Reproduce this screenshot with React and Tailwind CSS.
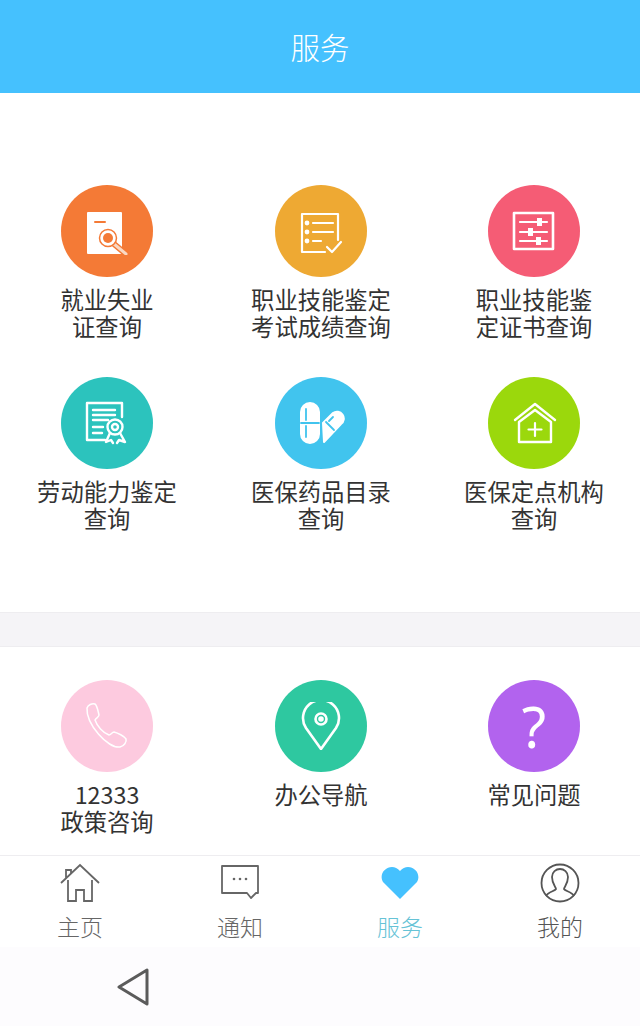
import React from 'react';

const Ico = ({ children, className = 'w-[48px] h-[48px]', sw = 2 }) => (
    <svg viewBox="0 0 48 48" className={className} fill="none" stroke="currentColor" strokeWidth={sw} strokeLinecap="round" strokeLinejoin="round">
        {children}
    </svg>
);

// 48x48 box is centred on the 92px circle
const IconSearchDoc = () => (
    <Ico>
        <path d="M5 6H38V46H5Z" fill="#fff" stroke="#fff" />
        <path d="M12 15H22" stroke="#f47a36" />
        <path d="M31 37L43 47" stroke="#f47a36" strokeWidth="6" />
        <path d="M31 37L43 47" stroke="#f9d9c4" strokeWidth="3" />
        <circle cx="25" cy="31" r="8.500" fill="#fff" stroke="#f47a36" strokeWidth="1.500" />
        <circle cx="25" cy="31" r="5" fill="#f47a36" stroke="none" />
    </Ico>
);

const IconChecklist = () => (
    <Ico sw={2.200}>
        <path d="M28 45H5V7H41V33" />
        <path d="M16 16H36M16 25H36M16 34H24" />
        <circle cx="10" cy="16" r="1.300" fill="currentColor" />
        <circle cx="10" cy="25" r="1.300" fill="currentColor" />
        <circle cx="10" cy="34" r="1.300" fill="currentColor" />
        <path d="M30 40L35 45L44 35" />
    </Ico>
);

const IconSliders = () => (
    <Ico sw={2.200}>
        <rect x="4" y="6" width="39" height="36" strokeWidth="2.600" />
        <path d="M10 15H37M10 25H37M10 34H37" />
        <rect x="27" y="11" width="5" height="8" fill="currentColor" stroke="none" />
        <rect x="18" y="21" width="5" height="8" fill="currentColor" stroke="none" />
        <rect x="26" y="30" width="5" height="8" fill="currentColor" stroke="none" />
    </Ico>
);

const IconCert = () => (
    <Ico sw={2.400}>
        <path d="M22 41H4V4H39V18" />
        <path d="M10 11H32M10 16H32M10 21H25M10 28H20M10 34H19" />
        <circle cx="32" cy="28" r="7.500" />
        <circle cx="32" cy="28" r="3" />
        <path d="M27 34L23 43L28 41L30 44M37 34L42 43L36 41L34 44" />
    </Ico>
);

const IconPills = () => (
    <Ico>
        <path d="M4 13A9 9 0 0 1 22 13V35A9 9 0 0 1 4 35Z" fill="#fff" stroke="#fff" />
        <path d="M9 10V21M4 24H22M9 27V38" stroke="#41c4ee" strokeWidth="1.800" />
        <path d="M27 43L44 25A6 6 0 0 0 36 14L26 24Z" fill="#fff" stroke="#fff" />
        <path d="M29 23L37 31M36 18L32 22" stroke="#41c4ee" strokeWidth="1.800" />
    </Ico>
);

const IconClinic = () => (
    <Ico>
        <path d="M5 21L25 5L45 21" strokeWidth="2.400" />
        <path d="M9 23V43H41V23L25 11Z" strokeWidth="2.400" />
        <path d="M25 24V37M18.500 30.500H31.500" strokeWidth="2.200" />
    </Ico>
);

const IconPhone = () => (
    <Ico sw={1.500}>
        <path d="M4 6C5 3 9 1 12 2C14 3 15 9 16 13C16 15 13 16 12 18C14 24 20 31 26 33C28 33 29 30 31 30C35 31 41 34 43 37C44 40 41 44 37 45C25 47 3 22 4 6Z" />
    </Ico>
);

const IconPin = () => (
    <Ico sw={2.600}>
        <path d="M24 47L9 26A18 18 0 1 1 39 26Z" />
        <circle cx="24" cy="17" r="5.500" />
        <circle cx="24" cy="17" r="1.500" fill="currentColor" />
    </Ico>
);

const IconHelp = () => (
    <span className="text-[56px] leading-none font-normal" style={{ fontFamily: '"Noto Sans", sans-serif' }}>?</span>
);

const gridItems = [
    { lines: ['就业失业', '证查询'], bg: 'bg-[#f47a36]', Icon: IconSearchDoc },
    { lines: ['职业技能鉴定', '考试成绩查询'], bg: 'bg-[#eea933]', Icon: IconChecklist },
    { lines: ['职业技能鉴', '定证书查询'], bg: 'bg-[#f55c75]', Icon: IconSliders },
    { lines: ['劳动能力鉴定', '查询'], bg: 'bg-[#2cc3bd]', Icon: IconCert },
    { lines: ['医保药品目录', '查询'], bg: 'bg-[#41c4ee]', Icon: IconPills },
    { lines: ['医保定点机构', '查询'], bg: 'bg-[#9bd80c]', Icon: IconClinic },
];

const extraItems = [
    { lines: ['12333', '政策咨询'], bg: 'bg-[#fdcadf]', Icon: IconPhone },
    { lines: ['办公导航'], bg: 'bg-[#2ec8a0]', Icon: IconPin },
    { lines: ['常见问题'], bg: 'bg-[#b263ee]', Icon: IconHelp },
];

const ServiceItem = ({ item }) => (
    <div className="flex flex-col items-center">
        <div className={`w-[92px] h-[92px] rounded-full flex items-center justify-center text-white ${item.bg}`}>
            <item.Icon />
        </div>
        <div className="mt-[8.500px] text-center text-[23.300px] leading-[27.500px] text-[#333]">
            {item.lines.map((l, i) => (
                <React.Fragment key={l}>
                    {i > 0 && <br />}
                    {l}
                </React.Fragment>
            ))}
        </div>
    </div>
);

const tabs = [
    {
        label: '主页',
        color: 'text-[#666]',
        icon: (
            <svg viewBox="0 0 40 40" className="w-[40px] h-[40px]" fill="none" stroke="#666" strokeWidth="1.800">
                <path d="M1 20L20 2L39 20M6 15V7H11V10M8 17V38H16V27H24V38H32V17" />
            </svg>
        ),
    },
    {
        label: '通知',
        color: 'text-[#666]',
        icon: (
            <svg viewBox="0 0 40 40" className="w-[40px] h-[40px]" fill="none" stroke="#666" strokeWidth="1.800" strokeLinejoin="round">
                <path d="M2 3H38V30H36L31 35L27 30H2Z" />
                <circle cx="14" cy="16" r="1.300" fill="#666" stroke="none" />
                <circle cx="20" cy="16" r="1.300" fill="#666" stroke="none" />
                <circle cx="26" cy="16" r="1.300" fill="#666" stroke="none" />
            </svg>
        ),
    },
    {
        label: '服务',
        color: 'text-[#66c3d6]',
        icon: (
            <svg viewBox="0 0 40 40" className="w-[40px] h-[40px]" fill="#45c1fe">
                <path d="M20 36L3 19C-3 8 12 -2 20 8C28 -2 43 8 37 19Z" />
            </svg>
        ),
    },
    {
        label: '我的',
        color: 'text-[#555]',
        icon: (
            <svg viewBox="0 0 40 40" className="w-[40px] h-[40px]" fill="none" stroke="#555" strokeWidth="1.800" strokeLinejoin="round">
                <circle cx="20" cy="20" r="18.500" />
                <path d="M6 33C8 29 15 28 16 26C16 24 12 21 12 14C12 9 16 6 20 6C24 6 28 9 28 14C28 21 24 24 24 26C25 28 32 29 34 33" />
            </svg>
        ),
    },
];

const App = () => {
    return (
        <div
            className="h-[1026px] w-[640px] overflow-hidden flex flex-col bg-white"
            style={{ fontFamily: '"Noto Sans CJK SC", "Noto Sans", sans-serif' }}
        >
            {/* Header */}
            <header className="h-[93px] shrink-0 bg-[#45c1fe] flex items-center justify-center text-white text-[29.500px] font-light">
                服务
            </header>

            {/* Main services */}
            <section className="h-[519px] shrink-0 pt-[92px] grid grid-cols-[214px_214px_212px] auto-rows-[192px]">
                {gridItems.map((item) => (
                    <ServiceItem key={item.lines.join('')} item={item} />
                ))}
            </section>

            <div className="h-[35px] shrink-0 bg-[#f5f4f7] border-y border-[#eeedf0]" />

            {/* Help services */}
            <section className="h-[208px] shrink-0 pt-[33px] grid grid-cols-[214px_214px_212px]">
                {extraItems.map((item) => (
                    <ServiceItem key={item.lines.join('')} item={item} />
                ))}
            </section>

            {/* Tab bar */}
            <nav className="h-[92px] shrink-0 border-t border-[#eeedf0] grid grid-cols-4 bg-white">
                {tabs.map((t) => (
                    <div key={t.label} className="flex flex-col items-center pt-[7px]">
                        {t.icon}
                        <span className={`mt-[10px] text-[23px] leading-[27px] font-light ${t.color}`}>{t.label}</span>
                    </div>
                ))}
            </nav>

            {/* System nav bar */}
            <div className="flex-1 bg-[#fdfcfe] pl-[117px] pt-[21px]">
                <svg viewBox="0 0 32 38" className="w-[32px] h-[38px]" fill="none" stroke="#5b5b5b" strokeWidth="3" strokeLinejoin="round">
                    <path d="M2 19L30 2V36Z" />
                </svg>
            </div>
        </div>
    );
};

export default App;
